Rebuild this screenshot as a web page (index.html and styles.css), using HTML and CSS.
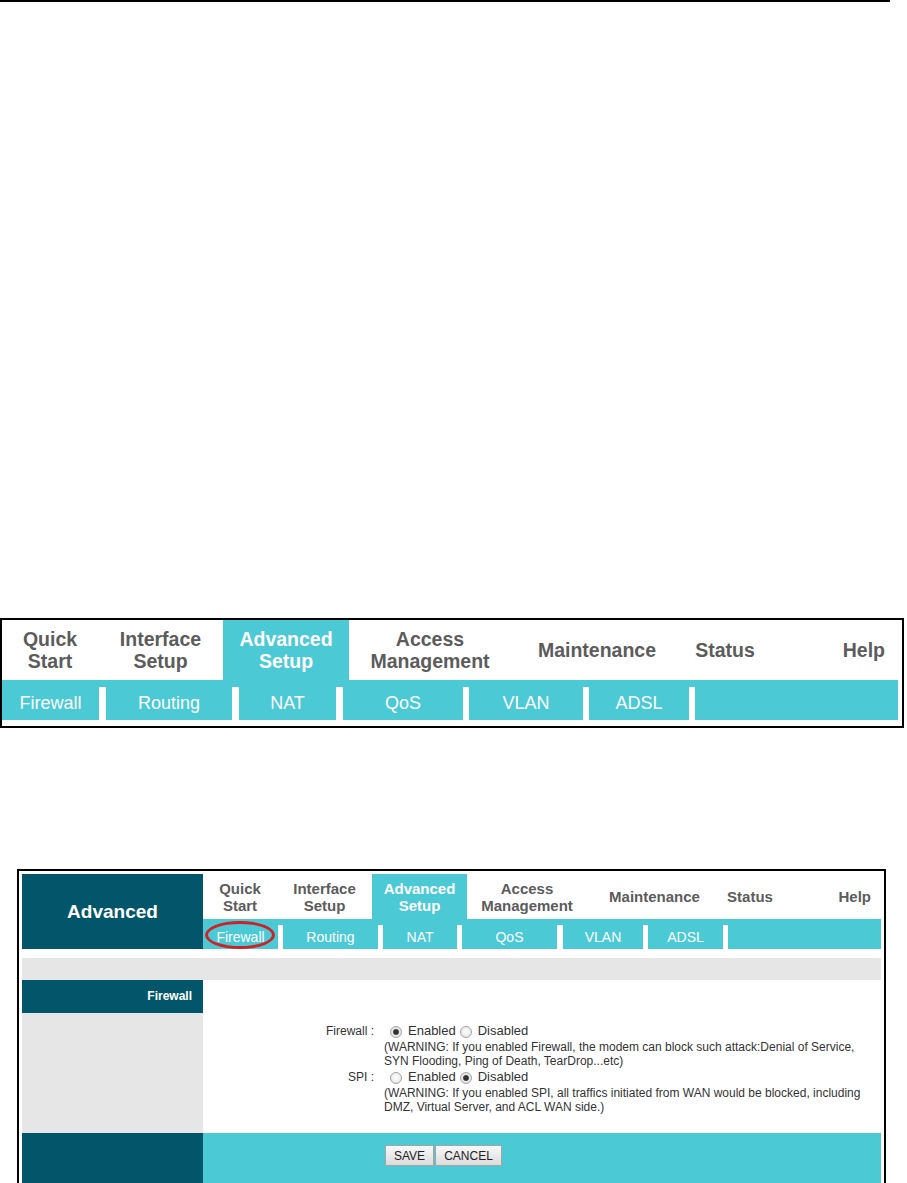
FILE: index.html
```html
<!DOCTYPE html>
<html lang="en">
<head>
<meta charset="utf-8">
<title>Advanced Setup - Firewall</title>
<link rel="stylesheet" href="styles.css">
</head>
<body>
<div class="rule"></div>

<div class="nav1">
  <div class="top1">
    <div class="t">Quick<br>Start</div>
    <div class="t">Interface<br>Setup</div>
    <div class="t on">Advanced<br>Setup</div>
    <div class="t">Access<br>Management</div>
    <div class="t">Maintenance</div>
    <div class="t">Status</div>
    <div class="t help">Help</div>
  </div>
  <div class="sub1">
    <div class="s">Firewall</div><div class="sep"></div>
    <div class="s">Routing</div><div class="sep"></div>
    <div class="s">NAT</div><div class="sep"></div>
    <div class="s">QoS</div><div class="sep"></div>
    <div class="s">VLAN</div><div class="sep"></div>
    <div class="s">ADSL</div><div class="sep"></div>
    <div class="s"></div>
  </div>
</div>

<div class="win">
  <div class="head">
    <div class="brand">Advanced</div>
    <div class="menus">
      <div class="top2">
        <div class="t">Quick<br>Start</div>
        <div class="t">Interface<br>Setup</div>
        <div class="t on">Advanced<br>Setup</div>
        <div class="t">Access<br>Management</div>
        <div class="t">Maintenance</div>
        <div class="t">Status</div>
        <div class="t help">Help</div>
      </div>
      <div class="sub2">
        <div class="s mark">Firewall<span class="ring"></span></div><div class="sep"></div>
        <div class="s">Routing</div><div class="sep"></div>
        <div class="s">NAT</div><div class="sep"></div>
        <div class="s">QoS</div><div class="sep"></div>
        <div class="s">VLAN</div><div class="sep"></div>
        <div class="s">ADSL</div><div class="sep"></div>
        <div class="s"></div>
      </div>
    </div>
  </div>

  <div class="strip"></div>

  <div class="section">
    <div class="side">
      <div class="side-title">Firewall</div>
    </div>
    <div class="form">
      <div class="frow">
        <div class="flabel">Firewall :</div>
        <div class="fval">
          <div class="opts"><span class="radio on"></span>Enabled<span class="radio"></span>Disabled</div>
          <div class="warn">(WARNING: If you enabled Firewall, the modem can block such attack:Denial of Service,<br>SYN Flooding, Ping of Death, TearDrop...etc)</div>
        </div>
      </div>
      <div class="frow">
        <div class="flabel">SPI :</div>
        <div class="fval">
          <div class="opts"><span class="radio"></span>Enabled<span class="radio on"></span>Disabled</div>
          <div class="warn">(WARNING: If you enabled SPI, all traffics initiated from WAN would be blocked, including<br>DMZ, Virtual Server, and ACL WAN side.)</div>
        </div>
      </div>
    </div>
  </div>

  <div class="foot">
    <div class="foot-side"></div>
    <div class="foot-main">
      <button class="btn">SAVE</button><button class="btn">CANCEL</button>
    </div>
  </div>
</div>
</body>
</html>
```

FILE: styles.css
```css
html, body {
  margin: 0;
  padding: 0;
  overflow: hidden;
  background: #ffffff;
}
body {
  font-family: "Liberation Sans", Arial, sans-serif;
  color: #222;
}

.rule {
  width: 890px;
  height: 2px;
  background: #000;
}

/* ---------- first (large) navigation bar ---------- */
.nav1 {
  box-sizing: border-box;
  width: 904px;
  margin-top: 616px;
  border: 2px solid #000;
  padding: 0 4px 6px 0;
}
.top1 {
  display: grid;
  grid-template-columns: 96px 125px 126px 162px 172px 84px 1fr;
  height: 60px;
}
.top1 .t,
.top2 .t {
  display: flex;
  align-items: center;
  justify-content: center;
  text-align: center;
  font-weight: bold;
  color: #5c5c5c;
}
.top1 .t {
  font-size: 19.5px;
  line-height: 22px;
}
.top1 .t.on,
.top2 .t.on {
  background: #4bc9d5;
  color: #fff;
}
.top1 .help {
  justify-content: flex-end;
  padding-right: 13px;
}
.sub1 {
  display: grid;
  grid-template-columns: 97px 7px 126px 7px 97px 7px 120px 6px 114px 6px 100px 6px 1fr;
  height: 40px;
  background: #4bc9d5;
}
.sub1 .s,
.sub2 .s {
  text-align: center;
  color: #fff;
  white-space: nowrap;
}
.sub1 .s {
  font-size: 18px;
  padding-top: 7px;
  line-height: 33px;
}
.sub1 .sep {
  background: #fff;
  margin-top: 7px;
}

/* ---------- second (window) screenshot ---------- */
.win {
  box-sizing: border-box;
  width: 869px;
  margin: 141px 0 0 17px;
  border: 2px solid #000;
  border-bottom: 0;
  padding: 3px 3px 0 3px;
}
.head {
  display: grid;
  grid-template-columns: 181px 1fr;
  height: 75px;
}
.brand {
  background: #03566a;
  color: #fff;
  font-weight: bold;
  font-size: 19px;
  display: flex;
  align-items: center;
  justify-content: center;
}
.menus {
  display: flex;
  flex-direction: column;
}
.top2 {
  display: grid;
  grid-template-columns: 74px 95px 95px 120px 135px 56px 1fr;
  height: 45px;
}
.top2 .t {
  font-size: 15px;
  line-height: 17px;
}
.top2 .help {
  justify-content: flex-end;
  padding-right: 10px;
}
.sub2 {
  display: grid;
  grid-template-columns: 75px 5px 95px 5px 74px 5px 95px 6px 80px 5px 75px 5px 1fr;
  height: 30px;
  background: #4bc9d5;
}
.sub2 .s {
  font-size: 14px;
  padding-top: 6px;
  line-height: 24px;
}
.sub2 .sep {
  background: #fff;
  margin-top: 6px;
}
.mark {
  position: relative;
}
.ring {
  position: absolute;
  left: 2px;
  top: 2px;
  width: 70px;
  height: 28px;
  box-sizing: border-box;
  border: 3px solid #cc2229;
  border-radius: 50%;
}

.strip {
  height: 22px;
  margin-top: 9px;
  background: #e6e6e6;
}

.section {
  display: grid;
  grid-template-columns: 181px 1fr;
  height: 153px;
}
.side {
  background: #e6e6e6;
}
.side-title {
  background: #03566a;
  color: #fff;
  font-weight: bold;
  font-size: 12px;
  height: 33px;
  line-height: 33px;
  text-align: right;
  padding-right: 11px;
}
.form {
  padding-top: 42px;
}
.frow {
  display: grid;
  grid-template-columns: 181px 1fr;
}
.flabel {
  font-size: 12px;
  line-height: 18px;
  text-align: right;
  padding-right: 10px;
  color: #333;
}
.opts {
  font-size: 13px;
  line-height: 18px;
  color: #333;
  display: flex;
  align-items: center;
}
.radio {
  box-sizing: border-box;
  width: 12px;
  height: 12px;
  border: 1px solid #a3a3a3;
  border-radius: 50%;
  background: radial-gradient(circle at 50% 45%, #ffffff 0, #ececec 60%, #d6d6d6 100%);
  margin: 1px 6px 0 4px;
}
.radio:first-child {
  margin-left: 6px;
}
.radio.on {
  background: radial-gradient(circle at 50% 50%, #333 0, #333 2.2px, #8c8c8c 3px, #eeeeee 3.6px, #d8d8d8 100%);
}
.warn {
  font-size: 12px;
  line-height: 14px;
  color: #333;
  white-space: nowrap;
}

.foot {
  display: grid;
  grid-template-columns: 181px 1fr;
  height: 50px;
}
.foot-side {
  background: #03566a;
}
.foot-main {
  background: #4bc9d5;
  padding: 12px 0 0 182px;
  display: flex;
  align-items: flex-start;
}
.btn {
  font-family: "Liberation Sans", Arial, sans-serif;
  font-size: 12px;
  color: #222;
  height: 21px;
  padding: 0 8px;
  margin: 0 1px 0 0;
  border: 1px solid #a4a4a4;
  border-radius: 0;
  background: linear-gradient(#f8f8f8, #dcdcdc);
}
```
